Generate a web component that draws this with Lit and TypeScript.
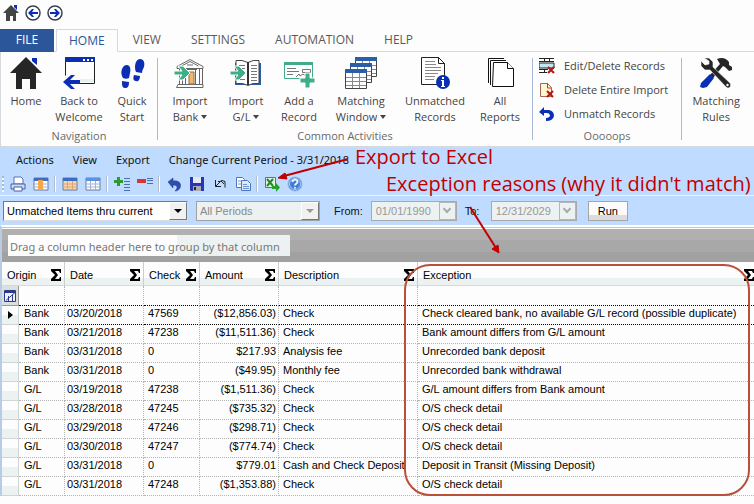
import { LitElement, html, svg, css, nothing } from "lit";
import { customElement, state } from "lit/decorators.js";
import { classMap } from "lit/directives/class-map.js";

const BLUE = "#0a2fb4";
const GREEN = "#3fae86";

const ICONS: Record<string, unknown> = {
  house: svg`<path d="M22 1h5v7l-5-4z" fill=${BLUE}/><path d="M16 0L0 16h6v16h6V22h8v10h6V16h6z" fill="#262626"/>`,
  back: svg`<path d="M2.500 1.500h29v25H17M2.500 1.500v17" fill="none" stroke="#222" stroke-width="1"/><path d="M2 0h30v5H2z" fill=${BLUE}/><path d="M20 2h2v2h-2zM24 2h2v2h-2zM28 2h2v2h-2z" fill="#fff"/><path d="M17 22h14v3H17z" fill="#e8f1f1"/><path d="M0 25l8-7h4l-5 5h10v4H7l5 5H8z" fill=${BLUE}/>`,
  steps: svg`<g fill=${BLUE}><path d="M11 8c3 0 4 4 3 8l-1 5c-2 1-4 1-6 0-2-3-2-6-1-9 1-2 2-4 5-4zM6 24l7 1c0 4-1 6-4 6s-3-3-3-7z"/><path d="M24 2c4 0 5 4 4 8-1 2-2 4-2 6l-6-1c-2-4-1-13 4-13zM18 18l6 1c0 4-2 6-4 5-3 0-3-3-2-6z"/></g>`,
  bank: svg`<g fill="#fff" stroke="#666" stroke-width="1"><path d="M3 9.500L16 2.500l13 7v2H3z"/><path d="M7.500 9L16 4.500 24.500 9M13 8h6"/><path d="M5.500 12v15M8.500 12v15M11.500 14v13M21.500 13v14M25.500 12v15M28.500 12v15M4 27.500h25v3H2.500zM10 12.500h13"/></g><path d="M15 15h5v12h-5z" fill="#f7b565" stroke="#776"/><path d="M0 14h8l-4-5h5l7 7-7 7H4l4-5H0z" fill=${GREEN} stroke="#fff" stroke-width="1"/>`,
  book: svg`<path d="M5 6h26v22H5z" fill="#2c5ea8"/><path d="M6 3.500q6-1 12 2 5-3 11-2v23q-6-1-11 2-5-3-12-2z" fill="#fff" stroke="#444"/><path d="M18 5v23" stroke="#333" stroke-width="2"/><path d="M9 8.500h6M9 11.500h6M9 22.500h6M21 8.500h6M21 11.500h6M21 14.500h6M21 17.500h6M21 20.500h6M21 23.500h6" stroke="#777"/><path d="M0 14h8l-4-5h5l7 7-7 7H4l4-5H0z" fill=${GREEN} stroke="#fff"/>`,
  add: svg`<path d="M1.500 5.500h28v16h-28z" fill="#fff" stroke=${GREEN}/><path d="M1 5h29v3H1z" fill=${GREEN}/><path d="M4 11.500h9M4 14.500h12M4 17.500h6M19.500 12.500h8v3h-8zM13 20l3-3 1 2 3-2 1 1 4-1" fill="none" stroke="#777"/><path d="M22 16h5v5h5v5h-5v5h-5v-5h-5v-5h5z" fill=${GREEN} stroke="#fff"/>`,
  windows: svg`${[[10, 0], [5, 6], [0, 12]].map(([x, y]) => svg`<path d="M${x + 0.5} ${y + 2.5}h21v17h-21z" fill="#fff" stroke="#444"/><path d="M${x} ${y}h22v4h-22z" fill="#2c5ea8"/><path d="M${x + 1} ${y + 8.5}h20M${x + 1} ${y + 12.5}h20M${x + 1} ${y + 16.5}h20M${x + 7.5} ${y + 4}v15M${x + 14.5} ${y + 4}v15" stroke="#888" stroke-width="1"/>`)}`,
  info: svg`<path d="M2.500 .5h17l6 6v21h-23z" fill="#fff" stroke="#222" stroke-width="1"/><path d="M19.500 .5v6h6z" fill="#fff" stroke="#222"/><path d="M6 4.500h10M6 7.500h11M6 10.500h16M6 13.500h16M6 16.500h13M6 19.500h10M6 22.500h9" stroke="#888"/><circle cx="24" cy="25" r="7" fill=${BLUE}/><path d="M23 20h2v2h-2zM22 23h3v6h1v1h-4v-1h1v-5h-1z" fill="#fff"/>`,
  reports: svg`<g fill="#fff" stroke="#111" stroke-width="1"><path d="M4.500 26V1.500H20M6.500 28V3.500H22" fill="none"/><path d="M9.500 5.500h14l6 6v18h-21z" stroke-width="1"/><path d="M23.500 5.500v6h6"/></g>`,
  tools: svg`<path d="M17 2c5-2 9-1 12 3v3l3 2v3l-3 1-4-4-2-1-10 12-3-3L20 7z" fill="#262626"/><path d="M10 17l4 4-7 9-4 1-3-1 1-4z" fill=${BLUE}/><path d="M4 1l5 0 4 4v5l17 16c2 3-1 7-4 4L10 13H5L1 9V4l4 4 4-1V4z" fill="#262626" stroke="#fdfdfd" stroke-width=".6"/><circle cx="27.500" cy="28" r="1.200" fill="#fff"/>`,
  circleBack: svg`<circle cx="8" cy="8" r="7" fill="#fff" stroke="#3a3f52" stroke-width="1.500"/><path d="M3 8l4-4h2L7 7h6v2H7l2 3H7z" fill=${BLUE}/>`,
  circleNext: svg`<circle cx="8" cy="8" r="7" fill="#fff" stroke="#3a3f52" stroke-width="1.500"/><path d="M13 8L9 4H7l2 3H3v2h6l-2 3h2z" fill=${BLUE}/>`,
  miniHouse: svg`<path d="M11 0h3v5l-3-3z" fill=${BLUE}/><path d="M8 0L0 8h3v8h4v-5h3v5h3V8h3z" fill="#444"/>`,
  editDelete: svg`<path d="M0 0h15v14H0z" fill="#fff"/><path d="M0 .5h15M0 3.500h15M5.500 0v4M10.500 0v4M0 11.500h9M0 14.500h8M5.500 11v4" stroke="#222"/><path d="M0 5h15v5H0z" fill="#bfe9f5" stroke="#222"/><path d="M9 9l6 6M15 9l-6 6" stroke="#b51414" stroke-width="2"/>`,
  deleteFile: svg`<path d="M1.500 1.500h7l4 4v9h-11z" fill="#fdf6cf" stroke="#a06a5a"/><path d="M8.500 1v5h4" fill="none" stroke="#c33"/><path d="M8 9l6 6M14 9l-6 6" stroke="#b51414" stroke-width="2"/>`,
  unmatch: svg`<path d="M5 1v3h5q5 1 5 6-1 5-8 5v-3q4 0 4-3-1-2-3-2H5v3L0 6z" fill=${BLUE}/>`,
  print: svg`<path d="M4 1h7l2 2v5H4z" fill="#fff" stroke="#5570b8"/><path d="M1 8h14v5H1z" fill="#c9d7f0" stroke="#4860a8"/><path d="M4 11h8v4H4z" fill="#fff" stroke="#4860a8"/>`,
  colChooser: svg`<path d="M1 2h14v12H1z" fill="#fff" stroke="#6a7a99"/><path d="M1 2h14v3H1z" fill="#3d6cc4"/><path d="M1 8h14M1 11h14" stroke="#9db4d8"/><path d="M5 4h5v10H5z" fill="#f3a64a"/>`,
  cards: svg`<path d="M1 2h14v12H1z" fill="#f9d7ab" stroke="#6a7a99"/><path d="M1 2h14v3H1z" fill="#3d6cc4"/><path d="M1 8h14M1 11h14M5.500 5v9M10.500 5v9" stroke="#d4a67a"/>`,
  grid: svg`<path d="M1 2h14v12H1z" fill="#fff" stroke="#6a7a99"/><path d="M1 2h14v3H1z" fill="#5c93e0"/><path d="M1 8h14M1 11h14M5.500 5v9M10.500 5v9" stroke="#9db4d8"/>`,
  expand: svg`<path d="M3 1h3v3h3v3H6v3H3V7H0V4h3z" fill="#2f9a2f"/><path d="M10 2.500h6M10 5.500h6M10 8.500h6M10 11.500h6M10 14.500h6" stroke="#4a6fae"/>`,
  collapse: svg`<path d="M0 3h9v4H0z" fill="#d33"/><path d="M10 2.500h6M10 4.500h6M10 7.500h6" stroke="#4a6fae"/>`,
  undo: svg`<path d="M2 6l5-4v3c6-1 9 3 7 7-1 2-3 3-5 3 3-3 3-6-2-6v3z" fill="#2f4fae" stroke="#1d3a8f" stroke-width=".5"/>`,
  save: svg`<path d="M1 1h14v14H2l-1-1z" fill="#2a35b0"/><path d="M4 1h8v6H4z" fill="#e4e8f8"/><path d="M4 10h8v5H4z" fill="#aab"/><path d="M5 11h2v3H5z" fill="#223"/>`,
  revert: svg`<path d="M3.500 4v6.500H9M3.500 10.500L8 6M6 5.500h2l2-1 3 1v6M9 5l3 3" fill="none" stroke="#222"/>`,
  copy: svg`<path d="M1.500 1.500h6l2 2v8h-8z" fill="#fff" stroke="#4a78c0"/><path d="M6.500 4.500h6l3 3v7h-9z" fill="#dce9fb" stroke="#4a78c0"/><path d="M8 8.500h4M8 10.500h6M8 12.500h6M3 5h3M3 8h3" stroke="#6f95d0"/>`,
  excel: svg`<path d="M1.500 1.500h10v10h-10z" fill="#e4f3e2" stroke="#5a7a5a"/><path d="M3 3l6 7M9 3l-6 7" stroke="#1f8a2a" stroke-width="2"/><path d="M8 10h4V7l4 4.500-4 4.500v-3H8z" fill="#27a02d"/>`,
  help: svg`<circle cx="8" cy="8" r="7" fill="#3f7fd8" stroke="#9ab8e4"/><circle cx="8" cy="8" r="5.500" fill="none" stroke="#e2edfb" stroke-width=".7"/><path d="M5.500 6c0-3 5-3 5 0 0 2-2.500 1.500-2.500 3.500M8 11v1.500" fill="none" stroke="#fff" stroke-width="1.700"/>`,
  filterEdit: svg`<path d="M2.500 2.500h11v11h-11z" fill="#eef0fb" stroke="#2c3a8a"/><path d="M2 4h12" stroke="#2c3a8a" stroke-width="2"/><path d="M4 12.500L13 4.500M6.500 8v5M10.500 7v6" stroke="#2c3a8a"/>`,
};

const icon = (name: string, size: number) =>
  html`<svg class="icon" width=${size} height=${size} viewBox="0 0 ${size} ${size}" aria-hidden="true">${ICONS[name]}</svg>`;

interface BigButton { icon: string; lines: string[]; menu?: boolean; size: string }

const NAVIGATION: BigButton[] = [
  { icon: "house", lines: ["Home"], size: "s" },
  { icon: "back", lines: ["Back to", "Welcome"], size: "m" },
  { icon: "steps", lines: ["Quick", "Start"], size: "s" },
];
const COMMON: BigButton[] = [
  { icon: "bank", lines: ["Import", "Bank"], menu: true, size: "m" },
  { icon: "book", lines: ["Import", "G/L"], menu: true, size: "m" },
  { icon: "add", lines: ["Add a", "Record"], size: "s" },
  { icon: "windows", lines: ["Matching", "Window"], menu: true, size: "l" },
  { icon: "info", lines: ["Unmatched", "Records"], size: "l" },
  { icon: "reports", lines: ["All", "Reports"], size: "m" },
];
const RULES: BigButton[] = [{ icon: "tools", lines: ["Matching", "Rules"], size: "m" }];
const FIXES = [
  ["editDelete", "Edit/Delete Records"],
  ["deleteFile", "Delete Entire Import"],
  ["unmatch", "Unmatch Records"],
];
const TABS = ["HOME", "VIEW", "SETTINGS", "AUTOMATION", "HELP"];
const MENUS = ["Actions", "View", "Export", "Change Current Period - 3/31/2018"];
const TOOLS: [string, string][][] = [
  [["print", "Print"], ["colChooser", "Choose columns"]],
  [["cards", "Card view"], ["grid", "Grid view"]],
  [["expand", "Expand all"], ["collapse", "Collapse all"]],
  [["undo", "Undo"], ["save", "Save"], ["revert", "Revert"], ["copy", "Copy"]],
  [["excel", "Export to Excel"], ["help", "Help"]],
];
const COLUMNS = ["Origin", "Date", "Check", "Amount", "Description", "Exception"];
const ROWS = [
  ["Bank", "03/20/2018", "47569", "($12,856.03)", "Check", "Check cleared bank, no available G/L record (possible duplicate)"],
  ["Bank", "03/21/2018", "47238", "($11,511.36)", "Check", "Bank amount differs from G/L amount"],
  ["Bank", "03/31/2018", "0", "$217.93", "Analysis fee", "Unrecorded bank deposit"],
  ["Bank", "03/31/2018", "0", "($49.95)", "Monthly fee", "Unrecorded bank withdrawal"],
  ["G/L", "03/19/2018", "47238", "($1,511.36)", "Check", "G/L amount differs from Bank amount"],
  ["G/L", "03/28/2018", "47245", "($735.32)", "Check", "O/S check detail"],
  ["G/L", "03/29/2018", "47246", "($298.71)", "Check", "O/S check detail"],
  ["G/L", "03/30/2018", "47247", "($774.74)", "Check", "O/S check detail"],
  ["G/L", "03/31/2018", "0", "$779.01", "Cash and Check Deposit", "Deposit in Transit (Missing Deposit)"],
  ["G/L", "03/31/2018", "47248", "($1,353.88)", "Check", "O/S check detail"],
];

const shared = css`
  * { box-sizing: border-box; }
  button { font: inherit; color: inherit; background: none; border: 0; padding: 0; margin: 0; }
  .icon { display: block; flex: none; }
`;

@customElement("ribbon-bar")
class RibbonBar extends LitElement {
  static styles = [shared, css`
    :host { display: block; font: 11px/16px "Open Sans", "Noto Sans", sans-serif; color: #444; background: #fdfdfd; }
    .quick { display: flex; gap: 6px; padding: 5px 3px 8px; height: 29px; }
    .tabs { display: flex; height: 23px; font-size: 12px; }
    .tab { height: 23px; padding: 0 15px; color: #5a5a5a; border-bottom: 1px solid #d5d8dc; }
    .file { background: #2b579a; color: #fff; width: 54px; padding: 0; border-bottom-color: #2b579a; }
    .gap { width: 2px; border-bottom: 1px solid #d5d8dc; }
    .active { border: 1px solid #d5d8dc; border-bottom-color: #fdfdfd; color: #2b579a; padding: 0 12px; }
    .rest { flex: 1; border-bottom: 1px solid #d5d8dc; }
    .panel { display: flex; height: 96px; border-bottom: 2px solid #d5d8dc; border-left: 1px solid #d5d8dc; }
    .group { display: flex; flex-direction: column; padding: 5px 4px 0; border-right: 1px solid #a9b9d9;
      border-image: linear-gradient(#fdfdfd 7px, #a9b9d9 7px, #a9b9d9 87px, #fdfdfd 87px) 1; }
    .nav { padding: 5px 0 0; }
    .last { border: 0; border-image: none; padding-left: 6px; }
    .buttons { display: flex; height: 68px; }
    .big { display: flex; flex-direction: column; align-items: center; gap: 4px; justify-content: flex-start; }
    .s { width: 50px; } .m { width: 56px; } .l { width: 74px; }
    .label { display: block; text-align: center; white-space: nowrap; }
    .drop { display: inline-block; border: 3px solid transparent; border-top: 4px solid #444; border-bottom: 0; margin-left: 3px; vertical-align: 2px; }
    .caption { margin-top: 3px; text-align: center; color: #6a6a6a; }
    .stack { display: flex; flex-direction: column; height: 72px; margin-top: -3px; margin-bottom: -1px; }
    .row { display: flex; align-items: center; gap: 9px; height: 24px; padding: 0 9px 0 2px; white-space: nowrap; }
  `];

  @state() private tab = "HOME";

  private big(b: BigButton) {
    return html`<button class="big ${b.size}">${icon(b.icon, 32)}
      <span>${b.lines.map((l, i) => html`<span class="label">${l}${b.menu && i === b.lines.length - 1 ? html`<span class="drop"></span>` : nothing}</span>`)}</span>
    </button>`;
  }

  render() {
    return html`
      <nav class="quick" aria-label="Quick access">
        <button aria-label="Home">${icon("miniHouse", 16)}</button>
        <button aria-label="Back">${icon("circleBack", 16)}</button>
        <button aria-label="Forward">${icon("circleNext", 16)}</button>
      </nav>
      <div class="tabs">
        <button class="tab file">FILE</button><span class="gap"></span>
        ${TABS.map((t) => html`<button class=${classMap({ tab: true, active: t === this.tab })} @click=${() => (this.tab = t)}>${t}</button>`)}
        <span class="rest"></span>
      </div>
      <div class="panel">
        <section class="group nav"><div class="buttons">${NAVIGATION.map((b) => this.big(b))}</div><div class="caption">Navigation</div></section>
        <section class="group"><div class="buttons">${COMMON.map((b) => this.big(b))}</div><div class="caption">Common Activities</div></section>
        <section class="group">
          <div class="stack">${FIXES.map(([i, t]) => html`<button class="row">${icon(i, 16)}<span>${t}</span></button>`)}</div>
          <div class="caption">Ooooops</div>
        </section>
        <section class="group last"><div class="buttons">${RULES.map((b) => this.big(b))}</div></section>
      </div>`;
  }
}

@customElement("command-bar")
class CommandBar extends LitElement {
  static styles = [shared, css`
    :host { display: block; background: #bfdbff; color: #111; font: 11px/16px "Noto Sans", "Open Sans", sans-serif; }
    .menus { display: flex; gap: 19px; padding: 4px 16px; height: 24px; white-space: nowrap; }
    .tools { display: flex; align-items: center; height: 24px; border-bottom: 1px solid #eaf3ff; }
    .grip { width: 2px; height: 16px; margin: 0 2px; background: repeating-linear-gradient(#a8b8cc 0 2px, #f2f7ff 2px 4px); }
    .tool { width: 23px; height: 20px; display: grid; place-items: center; }
    .sep { width: 2px; height: 16px; margin: 0 2px; background: linear-gradient(90deg, #b4bccb 50%, #fff 50%); }
    .filters { display: flex; align-items: center; height: 29px; padding-left: 3px; font: 11px/16px "Liberation Sans", Arial, sans-serif; }
    .combo { display: grid; grid-template-columns: 1fr 18px; height: 20px; border: 1px solid #777; border-right-color: #ddd; border-bottom-color: #ddd; background: #fff; }
    .combo select { grid-area: 1 / 1 / 2 / 3; appearance: none; border: 0; background: none; font: inherit; color: #000; padding: 0 20px 0 3px; margin: 0; min-width: 0; opacity: 1; }
    .arrow { grid-area: 1 / 2; pointer-events: none; display: grid; place-items: center; background: #f0f1f1; border: 1px solid #fff; border-right-color: #777; border-bottom-color: #777; }
    .arrow::after { content: ""; border: 4px solid transparent; border-top-color: #000; border-bottom: 0; }
    .type { width: 185px; margin-right: 8px; }
    .period { width: 124px; margin-right: 14px; }
    .off { background: #ecf1f1; border: 1px solid #a0a0a0; }
    .off select { color: #8a8a8a; }
    .off .arrow::after { border-top-color: #999; }
    .date { display: flex; width: 86px; height: 20px; border: 1px solid #a9a9a9; background: #ecf1f1; margin: 0 8px; }
    .date input { flex: 1; min-width: 0; border: 0; background: none; font: inherit; color: #999; padding: 0 0 0 4px; }
    .pick { width: 17px; display: grid; place-items: center; border: 1px solid #b5b5b5; }
    .chev { width: 6px; height: 6px; border: solid #aaa; border-width: 0 2px 2px 0; transform: rotate(45deg); margin-top: -3px; }
    .run { height: 20px; padding: 0 9px; border: 1px solid #a5a5a5; background: linear-gradient(#fbfbfb 75%, #dcdcdc 75%); margin-left: 3px; color: #000; }
    .to { width: 18px; }
  `];

  private date(id: string, value: string) {
    return html`<span class="date"><input id=${id} value=${value} disabled><button class="pick" disabled aria-label="Pick date"><span class="chev"></span></button></span>`;
  }

  render() {
    return html`
      <div class="menus">${MENUS.map((m) => html`<button>${m}</button>`)}</div>
      <div class="tools"><span class="grip"></span>
        ${TOOLS.map((set, i) => html`${i ? html`<span class="sep"></span>` : nothing}${set.map(([n, l]) => html`<button class="tool" aria-label=${l}>${icon(n, 16)}</button>`)}`)}
      </div>
      <div class="filters">
        <span class="combo type"><select aria-label="Items"><option>Unmatched Items thru current</option></select><span class="arrow"></span></span>
        <span class="combo period off"><select aria-label="Period" disabled><option>All Periods</option></select><span class="arrow"></span></span>
        <label for="from">From:</label>${this.date("from", "01/01/1990")}
        <label class="to" for="to">To:</label>${this.date("to", "12/31/2029")}
        <button class="run">Run</button>
      </div>`;
  }
}

@customElement("record-grid")
class RecordGrid extends LitElement {
  static styles = [shared, css`
    :host { display: block; border-top: 2px solid #fff; border-left: 2px solid #b8cce4; background: #fdfdfd; color: #000; font: 11px/16px "Liberation Sans", Arial, sans-serif; }
    .rule { height: 1px; background: #b8cce4; margin-bottom: 1px; }
    .drop { display: flex; padding: 6px; background: linear-gradient(#b0b0b0 11px, #a8a8a8 11px 23px, #a1a1a1 23px); }
    .hint { padding: 2px 10px 0 2px; height: 21px; background: linear-gradient(90deg, #fdfdfd 60%, #ecf1f1 60%); color: #777; font: 11px/20px "Noto Sans", "Open Sans", sans-serif; white-space: nowrap; }
    table { width: 100%; table-layout: fixed; border-collapse: separate; border-spacing: 0; }
    .c0 { width: 17px; } .c1 { width: 46px; } .c2 { width: 79px; } .c3 { width: 56px; } .c4 { width: 79px; } .c5 { width: 139px; }
    th { height: 24px; padding: 0; font-weight: 400; text-align: left; border-right: 1px solid #c9cfcf; border-bottom: 1px solid #d5dada; background: linear-gradient(#fdfdfd 16px, #ecf1f1 16px); }
    .head { display: flex; justify-content: space-between; align-items: center; padding: 2px 3px 0 5px; }
    th:last-child .head { padding-right: 0; }
    .sigma { width: 10px; height: 12px; }
    td { height: 19px; padding: 0 2px; border-right: 1px dotted #b5b5b5; border-bottom: 1px dotted #b5b5b5; white-space: nowrap; overflow: hidden; line-height: 15px; vertical-align: top; }
    td:last-child, th:last-child { border-right: 0; }
    .filter td { height: 20px; }
    .mark { padding: 0; vertical-align: middle; border: 1px solid #d0d5d5; border-width: 0 1px 1px 0; background: linear-gradient(#fdfdfd 50%, #ecf1f1 50%); }
    .filter .mark { background: #dcdfe0; border-color: #999; }
    .edit { display: grid; place-items: center; width: 16px; height: 19px; }
    .pointer { display: block; width: 0; margin-left: 6px; border: 4px solid transparent; border-left: 5px solid #000; border-right: 0; }
    .num { text-align: right; }
    .origin { padding-left: 5px; }
    .text { padding-left: 4px; }
    .filter td:not(.mark), .current td:not(.mark) { border-bottom-color: #000; }
  `];

  render() {
    const cls = ["origin", "", "text", "num", "text", "text"];
    return html`
      <div class="rule"></div>
      <div class="drop"><div class="hint">Drag a column header here to group by that column</div></div>
      <table>
        <colgroup>${[0, 1, 2, 3, 4, 5, 6].map((n) => html`<col class="c${n}">`)}</colgroup>
        <thead><tr>${COLUMNS.map((c, i) => html`<th colspan=${i ? 1 : 2} scope="col"><div class="head">${c}
          <svg class="sigma" viewBox="0 0 10 12" aria-label="Summary"><path d="M0 0h10v4H9L8 2H4l3 4-3 4h4l1-2h1v4H0v-2l4-4-4-4z"/></svg></div></th>`)}</tr></thead>
        <tbody>
          <tr class="filter"><td class="mark"><button class="edit" aria-label="Edit filter">${icon("filterEdit", 16)}</button></td>${COLUMNS.map(() => html`<td></td>`)}</tr>
          ${ROWS.map((r, i) => html`<tr class=${classMap({ current: i === 0 })}>
            <td class="mark">${i === 0 ? html`<span class="pointer"></span>` : nothing}</td>${r.map((v, k) => html`<td class=${cls[k]}>${v}</td>`)}</tr>`)}
        </tbody>
      </table>`;
  }
}

@customElement("app-root")
class AppRoot extends LitElement {
  static styles = [shared, css`
    :host { display: block; position: relative; min-height: 100vh; background: #fdfdfd; overflow: hidden; }
    .note { position: absolute; color: #c00000; font: 20px/24px "Open Sans", "Noto Sans", sans-serif; white-space: nowrap; }
    .export { left: 355px; top: 145px; }
    .reasons { left: 386px; top: 172px; }
    .arrows { position: absolute; left: 0; top: 0; width: 754px; height: 504px; pointer-events: none; }
    .ring { position: absolute; left: 404px; right: 4px; top: 264px; height: 232px; border: 2px solid #b8503a; border-radius: 26px; pointer-events: none; }
  `];

  render() {
    return html`
      <ribbon-bar></ribbon-bar>
      <command-bar></command-bar>
      <record-grid></record-grid>
      <svg class="arrows" viewBox="0 0 754 504" aria-hidden="true">
        <g stroke="#c00000" stroke-width="2" fill="#c00000">
          <path d="M348 159L284 176"/><path d="M278 178l7-5 2 6z" stroke-width="1"/>
          <path d="M470 207L496 248"/><path d="M499 253l-7-4 6-4z" stroke-width="1"/>
        </g>
      </svg>
      <div class="note export">Export to Excel</div>
      <div class="note reasons">Exception reasons (why it didn't match)</div>
      <div class="ring"></div>`;
  }
}
